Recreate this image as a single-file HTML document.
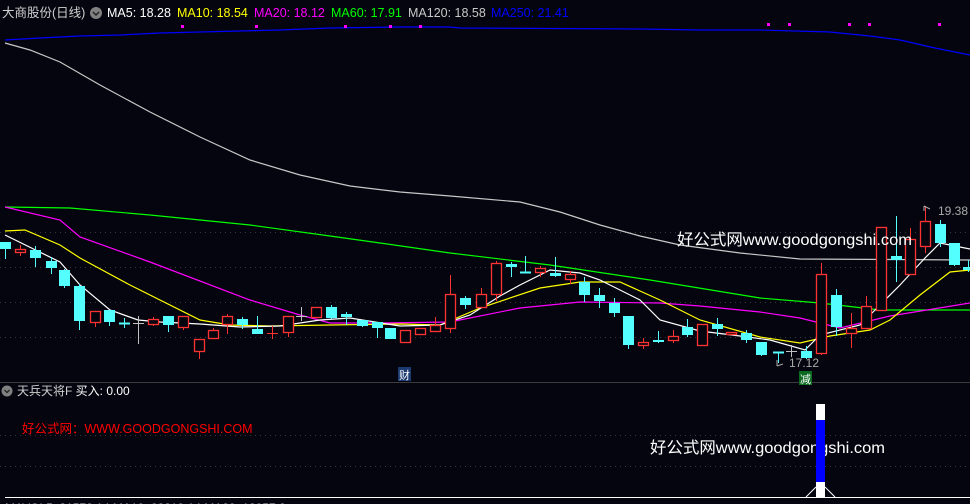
<!DOCTYPE html>
<html><head><meta charset="utf-8"><style>
html,body{margin:0;padding:0;background:#05050f;width:970px;height:504px;overflow:hidden}
svg{display:block}
text{font-family:"Liberation Sans","Noto Sans CJK SC",sans-serif}
</style></head><body>
<svg id="s" width="970" height="504" viewBox="0 0 970 504" xmlns="http://www.w3.org/2000/svg">
<rect width="970" height="504" fill="#05050f"/>
<g stroke="#3a3a3a" stroke-dasharray="1,4" stroke-width="1">
<line x1="0" y1="232.5" x2="970" y2="232.5"/><line x1="0" y1="267.5" x2="970" y2="267.5"/>
<line x1="0" y1="302.5" x2="970" y2="302.5"/><line x1="0" y1="337.5" x2="970" y2="337.5"/>
<line x1="0" y1="435.5" x2="970" y2="435.5"/><line x1="0" y1="466.5" x2="970" y2="466.5"/>
</g>
<line x1="0" y1="382.5" x2="970" y2="382.5" stroke="#3c3c3c"/>
<g fill="none" stroke-width="1.2">
<polyline stroke="#0000ff" points="5,40 40,38 80,36 120,35 160,33 200,32 240,31 280,30 330,28 400,27 450,27 460,28 640,29 700,30 760,30 830,32 870,36 900,40 935,48 970,55"/>
<polyline stroke="#c8c8c8" points="5,43 30,50 60,62 100,85 150,112 200,137 250,160 300,175 350,186 400,192 450,196 520,202 560,212 600,225 640,236 680,245 740,253 800,259 970,260"/>
<polyline stroke="#00ff00" points="5,207 70,208 150,215 250,225 330,236 380,243 450,253 550,265 650,280 760,298 820,303 880,310 970,310"/>
<polyline stroke="#ff00ff" points="5,207 60,220 80,237 150,262 250,300 300,315 330,323 380,323 450,322 520,308 580,302 660,303 700,306 760,312 800,318 820,323 840,328 890,316 970,303"/>
<polyline stroke="#ffff00" points="5,231 25,230 60,245 80,258 130,285 200,320 230,325 270,326 330,325 400,324 440,325 480,308 540,288 580,282 620,282 660,300 700,320 760,337 800,343 830,336 870,330 890,320 920,295 950,272 970,270"/>
<polyline stroke="#ffffff" points="5,235 60,262 80,285 110,310 138,320 160,322 200,324 240,327 280,326 320,320 350,318 400,326 440,325 470,315 500,296 520,285 550,270 580,273 600,280 640,300 660,320 700,331 740,336 770,340 805,350 820,335 860,325 880,305 900,285 925,258 940,243 970,249"/>
</g>
<g id="c"></g>
<g fill="#ff00ff"><rect x="181" y="25" width="3" height="3"/><rect x="255" y="25" width="3" height="3"/><rect x="344" y="25" width="3" height="3"/><rect x="389" y="25" width="3" height="3"/><rect x="419" y="25" width="3" height="3"/><rect x="767" y="23" width="3" height="3"/><rect x="788" y="23" width="3" height="3"/><rect x="848" y="23" width="3" height="3"/><rect x="868" y="23" width="3" height="3"/><rect x="938" y="23" width="3" height="3"/></g>
<text x="2" y="17" font-size="12.5" fill="#d0d0d0">大商股份(日线)</text>
<circle cx="96" cy="13" r="6" fill="#808080"/><path d="M93 12l3 3 3-3" stroke="#222" stroke-width="1.5" fill="none"/>
<text y="17" font-size="12.5"><tspan x="107" fill="#fff">MA5: 18.28</tspan><tspan x="177" fill="#ffff00">MA10: 18.54</tspan><tspan x="254" fill="#ff00ff">MA20: 18.12</tspan><tspan x="331" fill="#00ff00">MA60: 17.91</tspan><tspan x="408" fill="#c8c8c8">MA120: 18.58</tspan><tspan x="491" fill="#0000ff">MA250: 21.41</tspan></text>
<text x="677" y="245" font-size="16" fill="#fff" textLength="235" lengthAdjust="spacingAndGlyphs">好公式网www.goodgongshi.com</text>
<path d="M924 206v5M924 206l6 3" stroke="#aaa" fill="none"/><text x="938" y="215" font-size="12" fill="#aaa">19.38</text>
<path d="M777 360v6M777 366l6-2" stroke="#aaa" fill="none"/><text x="789" y="367" font-size="12" fill="#aaa">17.12</text>
<rect x="398" y="367" width="13" height="14" fill="#1a3a70"/><text x="399" y="379" font-size="11" fill="#fff">财</text>
<rect x="799" y="371" width="13" height="14" fill="#0a6a20"/><text x="800" y="383" font-size="11" fill="#fff">减</text>
<circle cx="7" cy="391" r="5.5" fill="#808080"/><path d="M4.5 390l2.5 2.5 2.5-2.5" stroke="#222" stroke-width="1.3" fill="none"/>
<text x="17" y="395" font-size="12" fill="#d0d0d0">天兵天将F  <tspan fill="#fff">买入: 0.00</tspan></text>
<text x="22" y="433" font-size="12.5" fill="#ff0000">好公式网：WWW.GOODGONGSHI.COM</text>
<text x="650" y="453" font-size="16" fill="#fff" textLength="235" lengthAdjust="spacingAndGlyphs">好公式网www.goodgongshi.com</text>
<rect x="816" y="404" width="9" height="16" fill="#fff"/><rect x="816" y="420" width="9" height="62" fill="#0000ff"/><rect x="816" y="482" width="9" height="15" fill="#fff"/>
<path d="M806 497l10-10M825 487l10 10" stroke="#fff" fill="none"/>
<line x1="5" y1="497.5" x2="970" y2="497.5" stroke="#fff"/>
<text x="5" y="512" font-size="12" fill="#ccc">MAVOL5: 31572.14 MA10: 28219.14 MA20: 18057.2</text>
</svg>
<script>
var d=[[5,'c',242,249,242,259],[20,'r',249,252,245,256],[35,'c',250,258,246,267],[51,'c',261,268,257,274],[64,'c',270,286,269,288],[79,'c',286,321,284,330],[95,'r',311,322,311,327],[109,'c',310,322,310,326],[124,'c',323,323,318,328],[138,'w',323,323,316,344],[153,'r',319,324,317,326],[168,'c',316,325,316,332],[183,'r',316,327,316,330],[199,'r',339,351,339,359],[213,'r',330,338,328,339],[227,'r',316,324,314,334],[242,'c',319,325,317,329],[257,'c',329,334,316,334],[272,'r',333,333,326,339],[288,'r',316,332,316,337],[301,'w',316,316,307,321],[316,'r',307,317,307,317],[331,'c',307,318,305,319],[346,'c',314,317,312,325],[362,'c',320,326,320,327],[377,'c',322,328,322,338],[390,'c',328,339,328,339],[405,'r',330,342,330,342],[420,'r',328,334,328,335],[435,'r',325,331,317,331],[450,'r',294,328,275,333],[465,'c',298,305,296,309],[481,'r',294,307,288,308],[496,'r',263,294,261,301],[511,'c',264,267,262,277],[525,'c',272,273,256,273],[540,'r',268,272,266,277],[555,'c',273,276,257,277],[570,'r',274,279,271,284],[584,'c',282,295,277,302],[599,'c',295,301,288,308],[614,'c',303,313,298,317],[628,'c',316,345,316,349],[643,'r',342,345,338,349],[658,'c',340,342,331,343],[673,'r',336,340,330,343],[687,'c',327,335,319,337],[702,'r',324,345,324,346],[717,'c',324,329,318,336],[731,'r',332,334,332,335],[746,'c',333,340,330,343],[761,'c',342,355,342,356],[778,'c',352,352,352,363],[791,'w',351,351,345,357],[806,'c',351,358,346,359],[821,'r',274,353,263,355],[836,'c',295,327,289,336],[851,'r',328,333,313,348],[866,'r',306,328,296,329],[881,'r',227,310,227,311],[896,'c',256,260,216,282],[910,'r',239,274,228,275],[925,'r',221,246,206,253],[940,'c',224,243,220,247],[954,'c',243,265,243,266],[968,'c',267,270,260,272]];
var h='';d.forEach(function(a){var x=a[0],col=a[1]=='r'?'#ff3232':a[1]=='c'?'#54ffff':'#c0c0c0';
h+='<line x1="'+(x+.5)+'" y1="'+a[4]+'" x2="'+(x+.5)+'" y2="'+a[5]+'" stroke="'+col+'"/>';
var hgt=a[3]-a[2];
if(hgt<2){h+='<line x1="'+(x-5)+'" y1="'+(a[2]+.5)+'" x2="'+(x+6)+'" y2="'+(a[2]+.5)+'" stroke="'+col+'" stroke-width="'+(a[1]=='c'?2:1)+'"/>';}
else if(a[1]=='r'){h+='<rect x="'+(x-4.5)+'" y="'+(a[2]+.5)+'" width="10" height="'+hgt+'" fill="#05050f" stroke="'+col+'" stroke-width="1.3"/>';}
else{h+='<rect x="'+(x-5)+'" y="'+a[2]+'" width="11" height="'+hgt+'" fill="'+col+'"/>';}});
document.getElementById('c').innerHTML=h;
</script>
</body></html>
